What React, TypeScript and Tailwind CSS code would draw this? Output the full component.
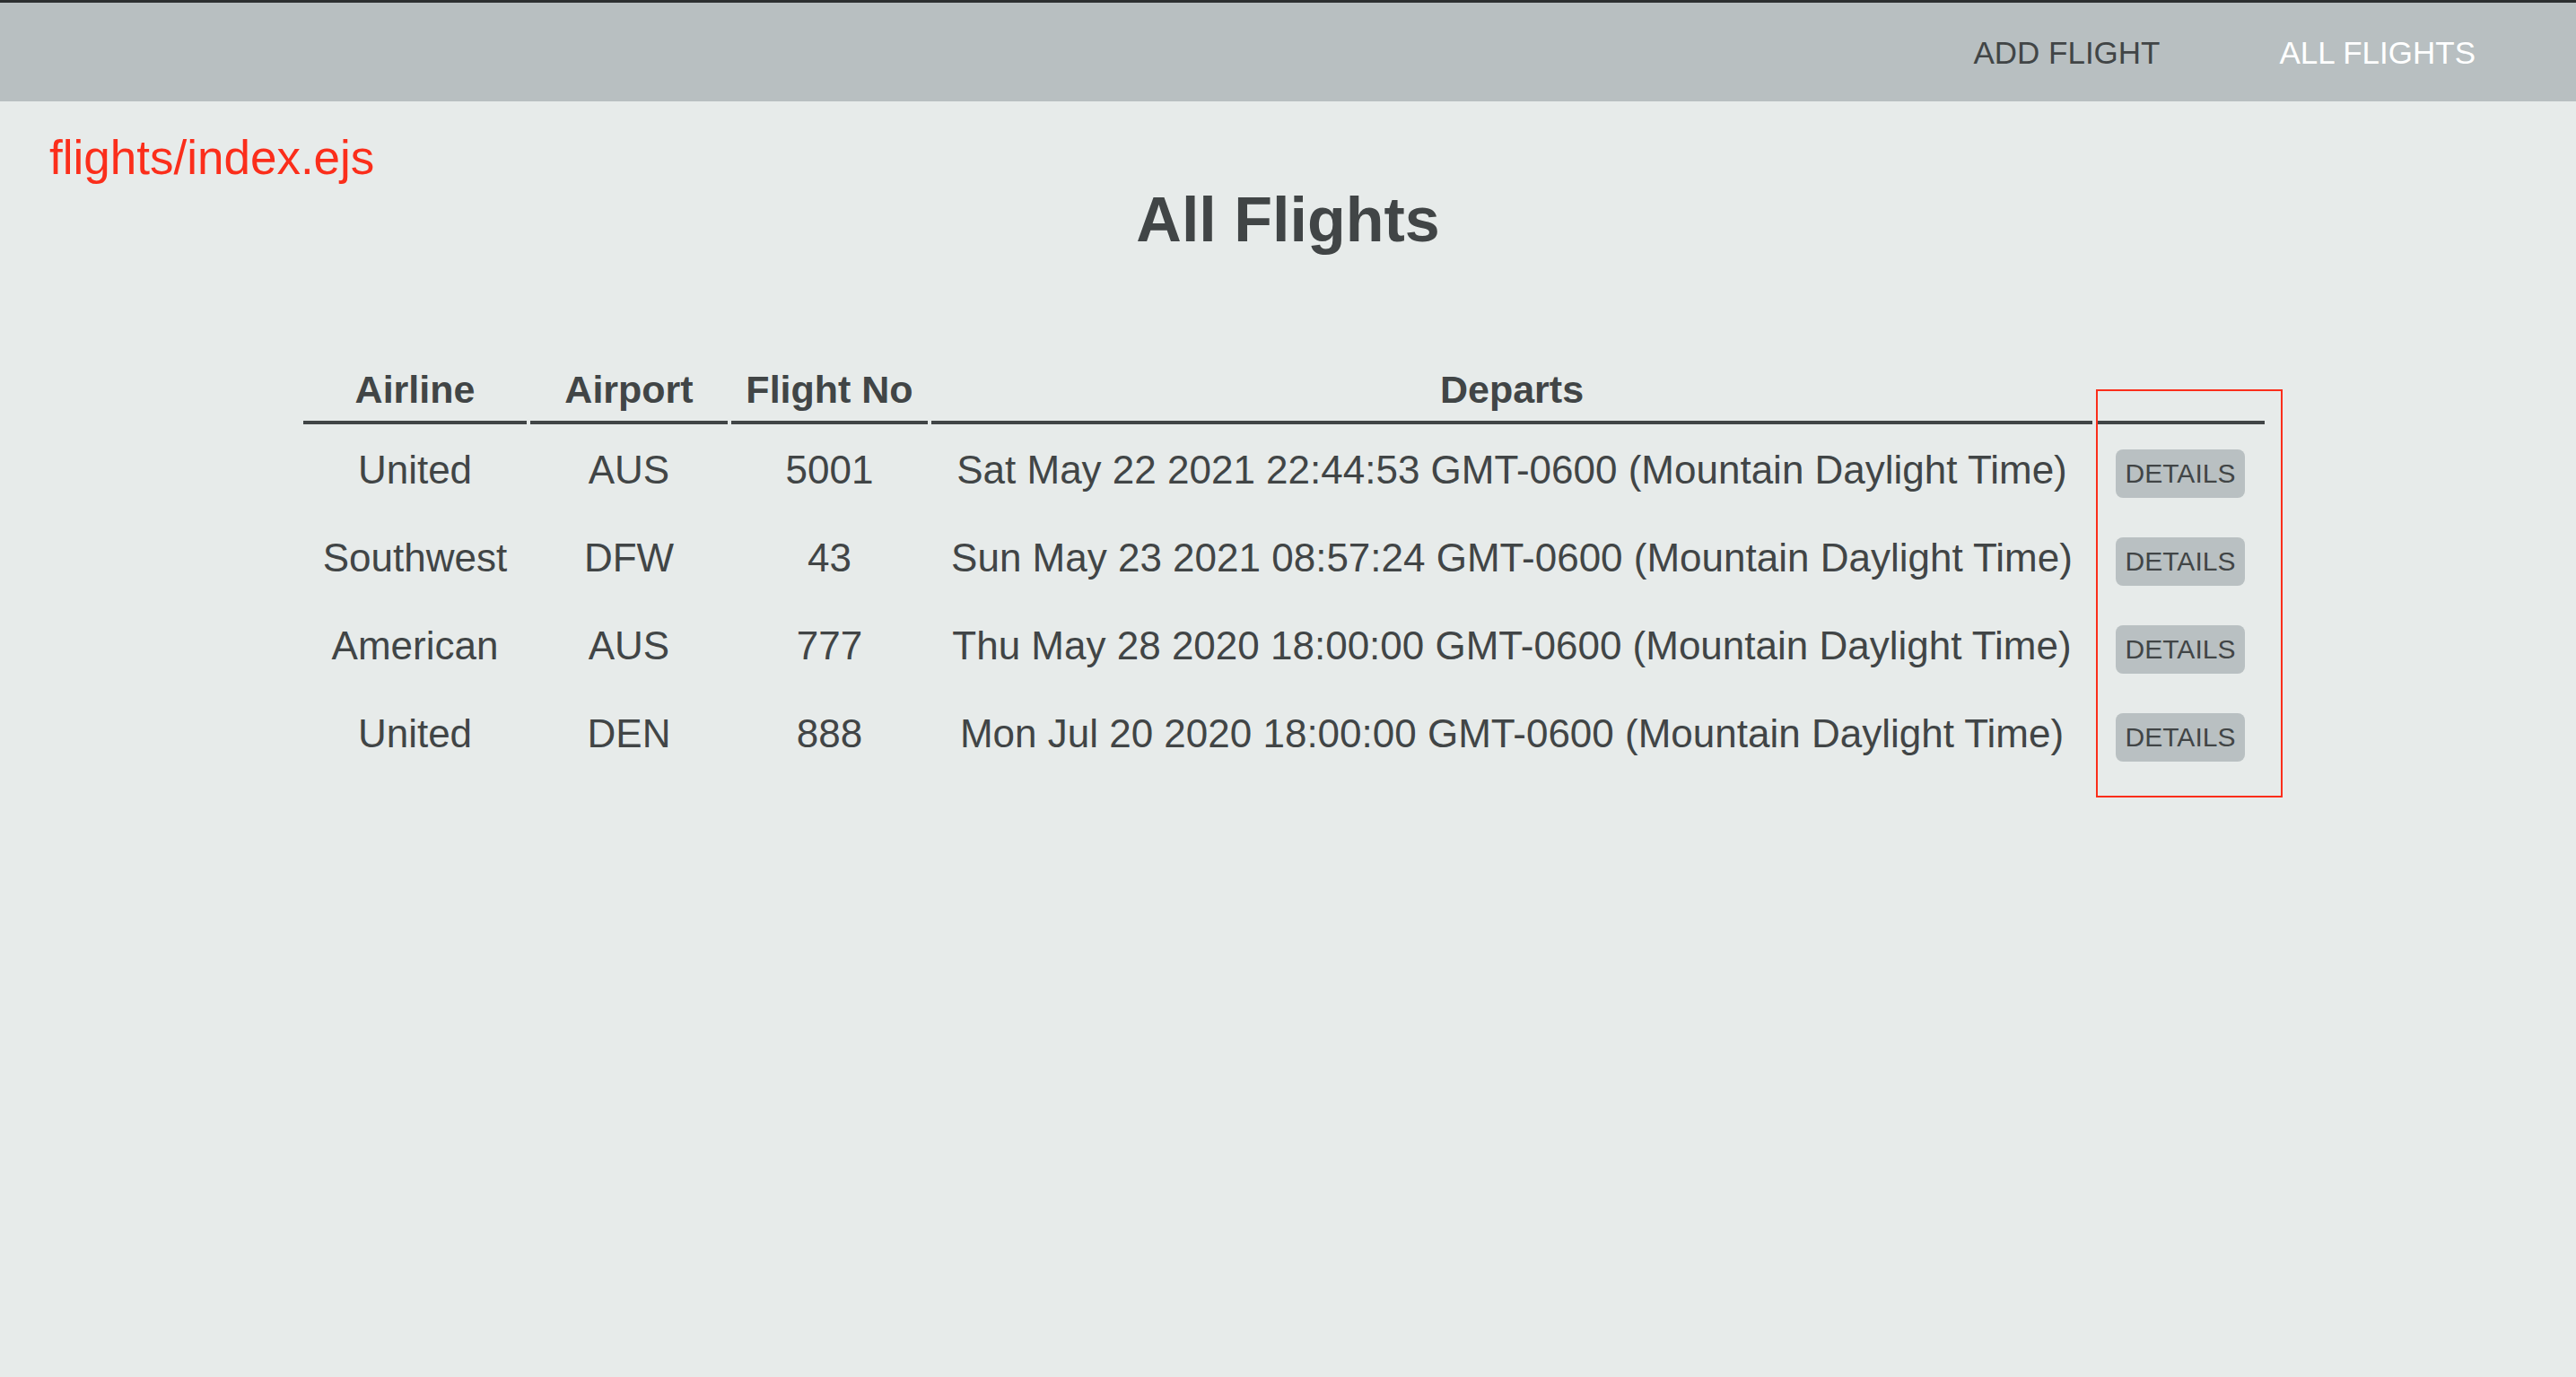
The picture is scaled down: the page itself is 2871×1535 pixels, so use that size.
const flights = [
  { airline: "United", airport: "AUS", flightNo: "5001", departs: "Sat May 22 2021 22:44:53 GMT-0600 (Mountain Daylight Time)" },
  { airline: "Southwest", airport: "DFW", flightNo: "43", departs: "Sun May 23 2021 08:57:24 GMT-0600 (Mountain Daylight Time)" },
  { airline: "American", airport: "AUS", flightNo: "777", departs: "Thu May 28 2020 18:00:00 GMT-0600 (Mountain Daylight Time)" },
  { airline: "United", airport: "DEN", flightNo: "888", departs: "Mon Jul 20 2020 18:00:00 GMT-0600 (Mountain Daylight Time)" },
];

function Nav() {
  return (
    <nav className="border-t-[3px] border-[#2c2f30] bg-[#b8bfc1] h-[113px] flex items-center justify-end gap-[133px] pr-[112px]">
      <a href="#" className="text-[35px] leading-none text-[#414546]">ADD FLIGHT</a>
      <a href="#" className="text-[35px] leading-none text-white">ALL FLIGHTS</a>
    </nav>
  );
}

function FlightsTable() {
  return (
    <div className="flex justify-center pr-[9px] mt-[133px]">
      <div className="relative">
        <table className="table-fixed border-separate border-spacing-x-[4px] border-spacing-y-0 text-[43px] leading-none text-[#414546]">
          <thead>
            <tr>
              <th className="w-[249px] pb-[13px] border-b-4 border-[#414546] font-bold">Airline</th>
              <th className="w-[220px] pb-[13px] border-b-4 border-[#414546] font-bold">Airport</th>
              <th className="w-[219px] pb-[13px] border-b-4 border-[#414546] font-bold">Flight No</th>
              <th className="w-[1294px] pb-[13px] border-b-4 border-[#414546] font-bold">Departs</th>
              <th className="w-[188px] pb-[13px] border-b-4 border-[#414546]"></th>
            </tr>
          </thead>
          <tbody className="text-[44px]">
            {flights.map((f, i) => (
              <tr key={i}>
                <td className="h-[98px] pt-1 align-middle text-center">{f.airline}</td>
                <td className="h-[98px] pt-1 align-middle text-center">{f.airport}</td>
                <td className="h-[98px] pt-1 align-middle text-center">{f.flightNo}</td>
                <td className="h-[98px] pt-1 align-middle text-center whitespace-nowrap">{f.departs}</td>
                <td className="h-[98px] pt-1 align-middle">
                  <a
                    href="#"
                    className="mt-2 mx-auto flex items-center justify-center w-[144px] h-[54px] rounded-[8px] bg-[#b9c0c2] text-[30px] leading-none text-[#414546]"
                  >
                    DETAILS
                  </a>
                </td>
              </tr>
            ))}
          </tbody>
        </table>
        <div className="absolute left-[2002px] top-[21px] w-[208px] h-[455px] border-2 border-[#fb2e1b] pointer-events-none" />
      </div>
    </div>
  );
}

export default function App() {
  return (
    <div className="min-h-screen bg-[#e7ebea] font-['Liberation_Sans',Arial,sans-serif]">
      <Nav />
      <p className="mt-[36px] ml-[55px] text-[53px] leading-none text-[#fb2e1b]">flights/index.ejs</p>
      <h1 className="mt-[8px] text-center text-[70px] leading-none font-bold text-[#414546]">All Flights</h1>
      <FlightsTable />
    </div>
  );
}
